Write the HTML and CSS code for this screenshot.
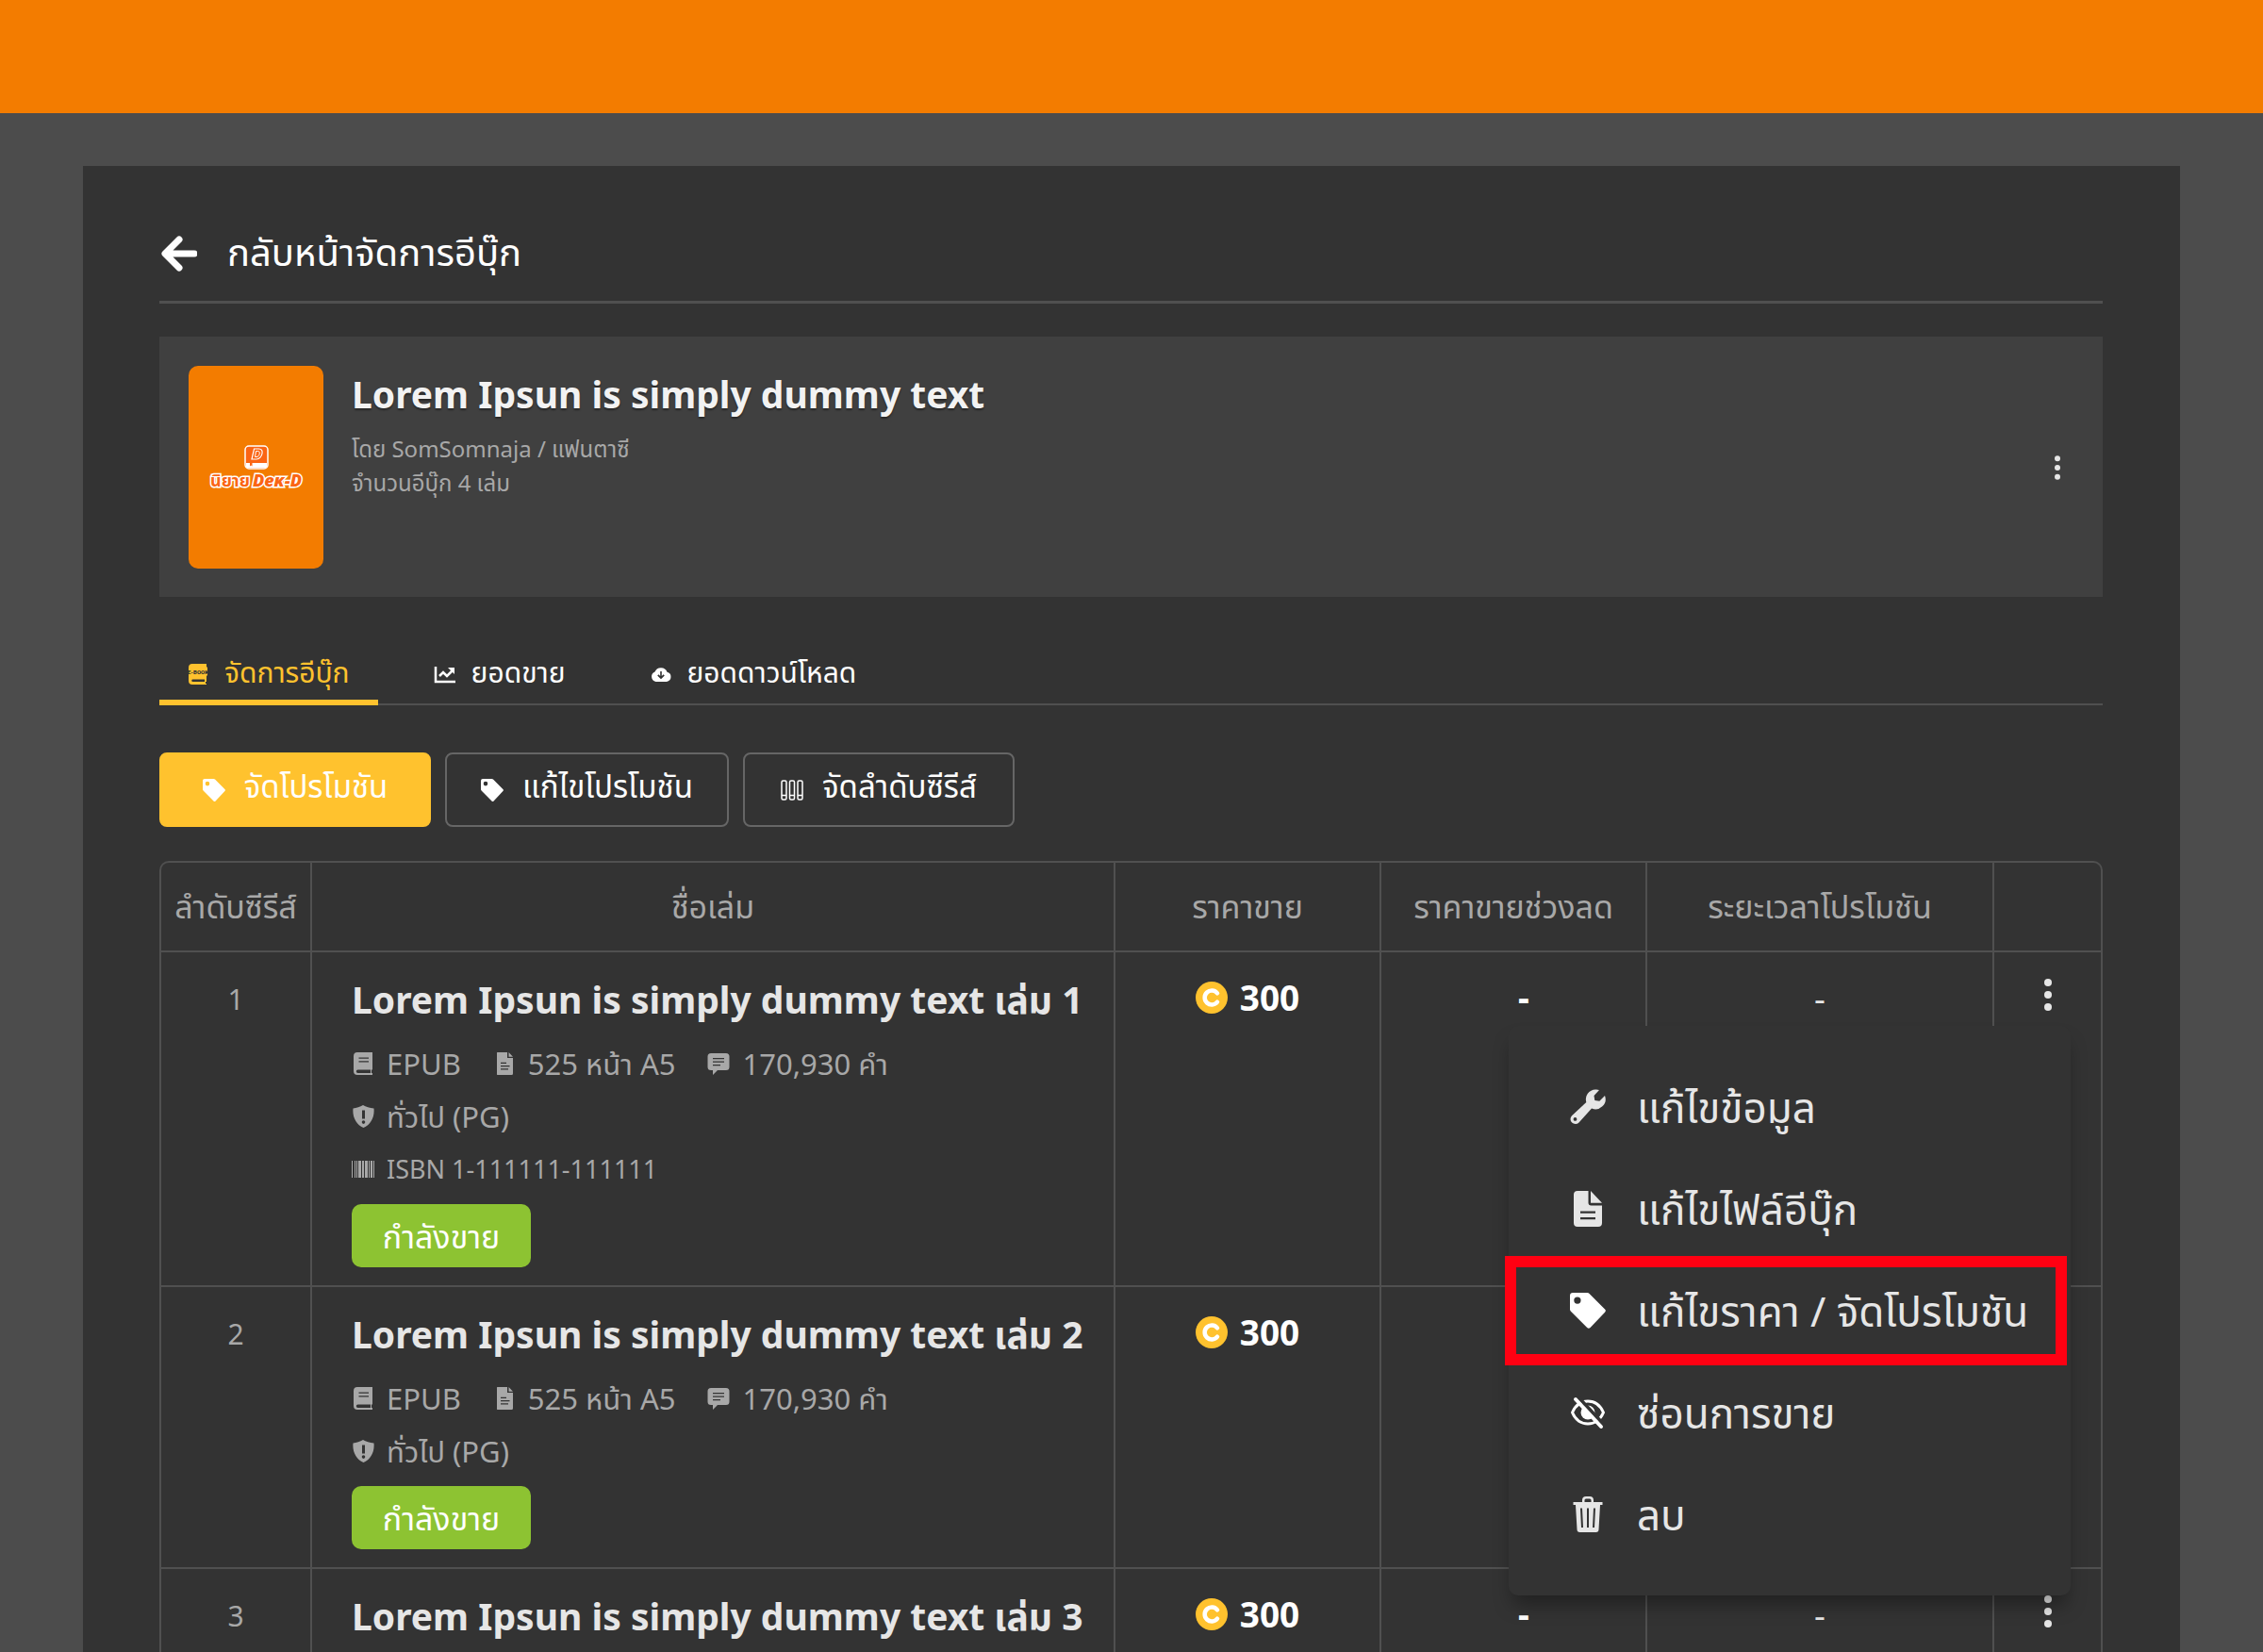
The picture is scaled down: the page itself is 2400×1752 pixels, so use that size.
FILE: index.html
```html
<!DOCTYPE html>
<html lang="th">
<head>
<meta charset="utf-8">
<title>จัดการอีบุ๊ก</title>
<meta name="viewport" content="width=device-width, initial-scale=1">
<link rel="stylesheet" href="styles.css">
</head>
<body>
<svg class="sprite" aria-hidden="true">
  <symbol id="i-tag" viewBox="0 0 24 24"><path fill-rule="evenodd" d="M2 0h9.6a2 2 0 0 1 1.4.6l10.4 10.4a1.5 1.5 0 0 1 0 2.1L13.6 23.4a1.5 1.5 0 0 1-2.1 0L.6 12.5A2 2 0 0 1 0 11.1V2a2 2 0 0 1 2-2zM5 2.8a2.3 2.3 0 1 0 0 4.6 2.3 2.3 0 0 0 0-4.6z"/></symbol>
  <symbol id="i-kebab" viewBox="0 0 8 34"><circle cx="4" cy="4" r="4"/><circle cx="4" cy="17" r="4"/><circle cx="4" cy="30" r="4"/></symbol>
  <symbol id="i-book" viewBox="0 0 24 24"><path fill-rule="evenodd" d="M6 0h16v18.500h-1v3.500h1v2H6a4 4 0 0 1-4-4V4a4 4 0 0 1 4-4zM7.500 5.600v1.200h10.500V5.600zM7.500 9.200v1.200h10.500V9.200zM6.500 18.600a1.700 1.700 0 0 0 0 3.400H20v-3.400z"/></symbol>
  <symbol id="i-file" viewBox="0 0 24 24"><path fill-rule="evenodd" d="M6.500 0H15v6h6v16.500a1.500 1.500 0 0 1-1.500 1.500h-13A1.500 1.500 0 0 1 4 22.500v-21A1.500 1.500 0 0 1 6.500 0zM8 10.800v1.300h6v-1.300zM8 14v1.300h9.500V14zM8 17.200v1.300h8v-1.300zM16.500 0 21 4.700h-4.500z"/></symbol>
  <symbol id="i-chat" viewBox="0 0 24 24"><path fill-rule="evenodd" d="M4 1h16a3.500 3.500 0 0 1 3.500 3.500v11A3.500 3.500 0 0 1 20 19h-9l-5 5v-5H4a3.500 3.500 0 0 1-3.500-3.500v-11A3.500 3.500 0 0 1 4 1zM6 6v1.300h12V6zM6 9.500v1.300h12V9.500zM6 13v1.300h8V13z"/></symbol>
  <symbol id="i-shield" viewBox="0 0 24 24"><path fill-rule="evenodd" d="M12 0c3 2 7 3 11.500 3.500C24.500 13 20 21 12.500 24 5 21 .5 13 1.500 3.500 5 3 9 2 12 0zM11 5.500v9h3v-9zM12.500 16.300a1.800 1.800 0 1 0 0 3.600 1.800 1.800 0 0 0 0-3.600z"/></symbol>
  <symbol id="i-barcode" viewBox="0 0 24 24"><path d="M0 3h1v18H0zM3 3h1v18H3zM5 3h1v18H5zM7 3h3v18H7zM11 3h2v18h-2zM14 3h3v18h-3zM18 3h1v18h-1zM20 3h2v18h-2zM23 3h1v18h-1z"/></symbol>
  <symbol id="i-coin" viewBox="0 0 34 34"><circle cx="17" cy="17" r="17" fill="#ffc22e"/><path d="M23 12.300a7.500 7.500 0 1 0 0 9.400" fill="none" stroke="#fff" stroke-width="4.500" stroke-linecap="round"/></symbol>
</svg>

<header class="topbar"></header>

<main class="panel">
  <nav class="back">
    <a class="back-link" href="#">
      <svg class="back-icon" viewBox="0 0 38 38" aria-hidden="true"><path d="M19 4 4 19l15 15M5 19h30" fill="none" stroke="#fff" stroke-width="7" stroke-linecap="round" stroke-linejoin="round"/></svg>
      <span>กลับหน้าจัดการอีบุ๊ก</span>
    </a>
  </nav>

  <section class="series">
    <div class="cover">
      <svg class="cover-mark" viewBox="0 0 26 26" aria-hidden="true">
        <rect x="1" y="1" width="24" height="24" rx="4" fill="#fb6514" stroke="#fff" stroke-width="1.500"/>
        <path d="M10.500 4h5c3 0 4 2 3.500 5s-3 6-6 6H8z" fill="none" stroke="#fff" stroke-width="1.200"/>
        <path d="M12.500 6.500h2c1.500 0 2 1 1.700 2.700S15 12.500 13 12.500h-1.500z" fill="none" stroke="#fff" stroke-width="1"/>
        <path d="M2 19h22v4a1 1 0 0 1-1 1H3a1 1 0 0 1-1-1z" fill="#fff"/><path d="M6 19h2.500v3.500L7.200 21.500 6 22.500z" fill="#fb6514"/>
      </svg>
      <div class="cover-name"><span>นิยาย</span><b>Deĸ-D</b></div>
    </div>
    <div class="series-info">
      <h1 class="series-title">Lorem Ipsun is simply dummy text</h1>
      <p>โดย SomSomnaja / แฟนตาซี</p>
      <p>จำนวนอีบุ๊ก 4 เล่ม</p>
    </div>
    <button class="kebab kebab-small" type="button" aria-label="เมนู"><svg><use href="#i-kebab"/></svg></button>
  </section>

  <nav class="tabs">
    <a class="tab tab-active" href="#">
      <svg viewBox="0 0 22 22" aria-hidden="true"><path fill-rule="evenodd" d="M5 0h15v3l1 1v8l-1 1v6h-1v2h1v1H5a4 4 0 0 1-4-4V4a4 4 0 0 1 4-4zM5.500 16.500a1 1 0 0 0 0 2.500H18v-2.500z"/><text class="ebook-word" x="11" y="11" text-anchor="middle">E-BOOK</text></svg>
      <span>จัดการอีบุ๊ก</span>
    </a>
    <a class="tab" href="#">
      <svg viewBox="0 0 22 22" aria-hidden="true"><path d="M1 3v16h21" fill="none" stroke="currentColor" stroke-width="2.500"/><path d="m5 13 4-4 4 4 6-6" fill="none" stroke="currentColor" stroke-width="2.500"/><path d="M14 4h7v7z"/></svg>
      <span>ยอดขาย</span>
    </a>
    <a class="tab" href="#">
      <svg viewBox="0 0 22 22" aria-hidden="true"><path fill-rule="evenodd" d="M5.500 19A5.500 5.500 0 0 1 4.500 8.500 7 7 0 0 1 17.500 8.800 5.200 5.200 0 0 1 17 19zM10.200 8v5L8.400 11.300l-1.200 1.200L11 16.200l3.800-3.700-1.200-1.200L11.800 13V8z"/></svg>
      <span>ยอดดาวน์โหลด</span>
    </a>
  </nav>

  <div class="actions">
    <button class="btn btn-primary" type="button"><svg><use href="#i-tag"/></svg><span>จัดโปรโมชัน</span></button>
    <button class="btn" type="button"><svg><use href="#i-tag"/></svg><span>แก้ไขโปรโมชัน</span></button>
    <button class="btn" type="button"><svg viewBox="0 0 24 24" aria-hidden="true"><g fill="none" stroke="currentColor" stroke-width="1.500"><rect x="1" y="2" width="5" height="20" rx="1.500"/><rect x="9.500" y="2" width="5" height="20" rx="1.500"/><rect x="18" y="2" width="5" height="20" rx="1.500"/><path d="M1 17.500h5M9.500 17.500h5M18 17.500h5"/></g></svg><span>จัดลำดับซีรีส์</span></button>
  </div>

  <table class="books">
    <colgroup><col class="c-no"><col><col class="c-price"><col class="c-price"><col class="c-time"><col class="c-menu"></colgroup>
    <thead>
      <tr><th>ลำดับซีรีส์</th><th>ชื่อเล่ม</th><th>ราคาขาย</th><th>ราคาขายช่วงลด</th><th>ระยะเวลาโปรโมชัน</th><th></th></tr>
    </thead>
    <tbody>
      <tr>
        <td class="num">1</td>
        <td class="book">
          <h2>Lorem Ipsun is simply dummy text เล่ม 1</h2>
          <ul class="meta">
            <li><svg><use href="#i-book"/></svg>EPUB</li>
            <li><svg><use href="#i-file"/></svg>525 หน้า A5</li>
            <li><svg><use href="#i-chat"/></svg>170,930 คำ</li>
          </ul>
          <ul class="meta"><li><svg><use href="#i-shield"/></svg>ทั่วไป (PG)</li></ul>
          <ul class="meta"><li class="isbn"><svg><use href="#i-barcode"/></svg>ISBN 1-111111-111111</li></ul>
          <span class="badge">กำลังขาย</span>
        </td>
        <td><span class="price"><svg><use href="#i-coin"/></svg>300</span></td>
        <td class="strong">-</td>
        <td class="dash">-</td>
        <td class="menu-cell">
          <button class="kebab" type="button" aria-label="เมนูเล่ม 1" aria-expanded="true"><svg><use href="#i-kebab"/></svg></button>
          <div class="menu" role="menu">
            <button type="button" role="menuitem"><svg viewBox="0 0 38 38" aria-hidden="true"><path fill-rule="evenodd" d="M27 .500a11 11 0 0 1 4 .4l-5.500 6 .8 5 5 .8 5.700-5.600a10.500 10.500 0 0 1-14 13.300L9.500 35.500a5.200 5.200 0 0 1-7.500-7.300L17.300 14A10.500 10.500 0 0 1 27 .500zM5.500 30a1.900 1.900 0 1 0 0 3.800 1.900 1.900 0 0 0 0-3.800z"/></svg><span>แก้ไขข้อมูล</span></button>
            <button type="button" role="menuitem"><svg viewBox="0 0 38 38" aria-hidden="true"><path fill-rule="evenodd" d="M8 0h11.500v12.500a3 3 0 0 0 3 3H34V34a4 4 0 0 1-4 4H8a4 4 0 0 1-4-4V4a4 4 0 0 1 4-4zM11 21.500v2.300h16v-2.300zM11 28v2.300h16V28zM22 0l12 12.800H22z"/></svg><span>แก้ไขไฟล์อีบุ๊ก</span></button>
            <button class="is-marked" type="button" role="menuitem"><svg><use href="#i-tag"/></svg><span>แก้ไขราคา / จัดโปรโมชัน</span></button>
            <button type="button" role="menuitem"><svg viewBox="0 0 38 38" aria-hidden="true"><path d="M2.500 19C6 11 12 7 19 7s13 4 16.500 12C32 27 26 31 19 31S6 27 2.500 19z" fill="none" stroke="#fff" stroke-width="3"/><circle cx="19" cy="19" r="7.500" fill="#fff"/><path d="m9 3 27 29" stroke="#333" stroke-width="4"/><path d="m6 5 27 29" stroke="#fff" stroke-width="4" stroke-linecap="round"/></svg><span>ซ่อนการขาย</span></button>
            <button type="button" role="menuitem"><svg viewBox="0 0 38 38" aria-hidden="true"><path fill-rule="evenodd" d="M13 6V4a4 4 0 0 1 4-4h4a4 4 0 0 1 4 4v2h9.500v3H32l-1.500 26a3 3 0 0 1-3 3h-17a3 3 0 0 1-3-3L6 9H3.500V6zM15.500 6h7V4a1.500 1.500 0 0 0-1.500-1.500h-4A1.500 1.500 0 0 0 15.500 4zM11 12.500l1 20.500h2l-1-20.500zM18 12.500V33h2V12.500zM25 12.500 24 33h2l1-20.500z"/></svg><span>ลบ</span></button>
          </div>
        </td>
      </tr>
      <tr>
        <td class="num">2</td>
        <td class="book">
          <h2>Lorem Ipsun is simply dummy text เล่ม 2</h2>
          <ul class="meta">
            <li><svg><use href="#i-book"/></svg>EPUB</li>
            <li><svg><use href="#i-file"/></svg>525 หน้า A5</li>
            <li><svg><use href="#i-chat"/></svg>170,930 คำ</li>
          </ul>
          <ul class="meta"><li><svg><use href="#i-shield"/></svg>ทั่วไป (PG)</li></ul>
          <span class="badge">กำลังขาย</span>
        </td>
        <td><span class="price"><svg><use href="#i-coin"/></svg>300</span></td>
        <td></td>
        <td></td>
        <td></td>
      </tr>
      <tr>
        <td class="num">3</td>
        <td class="book"><h2>Lorem Ipsun is simply dummy text เล่ม 3</h2></td>
        <td><span class="price"><svg><use href="#i-coin"/></svg>300</span></td>
        <td class="strong">-</td>
        <td class="dash">-</td>
        <td class="menu-cell"><button class="kebab" type="button" aria-label="เมนูเล่ม 3"><svg><use href="#i-kebab"/></svg></button></td>
      </tr>
    </tbody>
  </table>
</main>
</body>
</html>
```
FILE: styles.css
```css
:root {
  --orange: #f37c00;
  --yellow: #ffc22e;
  --panel: #333;
  --line: #505050;
  --muted: #a8a8a8;
  --text: #e6e6e6;
}

* { box-sizing: border-box; }

body {
  margin: 0;
  min-height: 100vh;
  display: flex;
  flex-direction: column;
  background: #4c4c4c;
  color: #fff;
  font-family: "Noto Sans", "Noto Sans Thai", "Liberation Sans", sans-serif;
  font-size: 32px;
}

h1, h2, p, ul { margin: 0; padding: 0; }
ul { list-style: none; }
a { color: inherit; text-decoration: none; }
button { font: inherit; color: inherit; background: none; border: 0; padding: 0; cursor: pointer; }
svg { fill: currentColor; flex: none; }
.sprite { display: none; }

.topbar { height: 120px; background: var(--orange); }

.panel {
  flex: 1;
  margin: 56px 88px 0;
  padding: 48px 82px 0 81px;
  background: var(--panel);
}

.back { padding-bottom: 5px; border-bottom: 3px solid var(--line); }
.back-link { display: flex; align-items: center; gap: 32px; height: 90px; font-size: 40px; padding-left: 2px; }
.back-icon { width: 38px; height: 38px; }

.series {
  display: flex;
  gap: 30px;
  margin-top: 35px;
  padding: 31px 31px 30px;
  background: #404040;
}
.cover {
  width: 143px;
  height: 215px;
  border-radius: 10px;
  background: var(--orange);
  display: flex;
  flex-direction: column;
  align-items: center;
  justify-content: center;
}
.cover-mark { width: 26px; height: 26px; }
.cover-name {
  display: flex;
  gap: 3px;
  align-items: baseline;
  font-size: 18px;
  line-height: 22px;
  font-weight: 700;
  color: #fb6514;
  -webkit-text-stroke: 3px #fff;
  paint-order: stroke fill;
}
.cover-name b { font-style: italic; }
.series-info { flex: 1; color: var(--muted); font-size: 24px; line-height: 36px; }
.series-title {
  margin-bottom: 10px;
  color: #f2f2f2;
  font-size: 39px;
  line-height: 60px;
  font-weight: 700;
  text-shadow: 0 2px 2px rgba(0, 0, 0, .4);
}

.kebab { display: inline-flex; justify-content: center; width: 48px; color: var(--text); }
.kebab svg { width: 8px; height: 34px; }
.kebab-small { align-self: center; margin-right: -7px; }
.kebab-small svg { width: 6px; height: 26px; }

.tabs { display: flex; gap: 30px; margin-top: 48px; border-bottom: 2px solid var(--line); }
.tab {
  display: flex;
  align-items: center;
  gap: 17px;
  height: 67px;
  padding: 6px 30px 0;
  margin-bottom: -2px;
  font-size: 30px;
  border-bottom: 6px solid transparent;
}
.tab svg { width: 22px; height: 22px; overflow: visible; }
.ebook-word { font-family: Roboto, sans-serif; font-size: 6px; font-weight: 900; fill: var(--panel); }
.tab-active { color: var(--yellow); border-color: var(--yellow); }

.actions { display: flex; gap: 15px; margin-top: 50px; }
.btn {
  display: flex;
  align-items: center;
  justify-content: center;
  gap: 20px;
  min-width: 288px;
  height: 79px;
  padding: 0 36px;
  border: 2px solid #666;
  border-radius: 8px;
  font-size: 33px;
}
.btn svg { width: 24px; height: 24px; }
.btn span { padding-bottom: 4px; }
.btn-primary { background: var(--yellow); border-color: var(--yellow); }

.books {
  width: 100%;
  margin-top: 36px;
  table-layout: fixed;
  border-collapse: separate;
  border-spacing: 0;
  border: 2px solid var(--line);
  border-bottom: 0;
  border-radius: 10px 10px 0 0;
  color: var(--muted);
}
.c-no { width: 160px; }
.c-price { width: 282px; }
.c-time { width: 368px; }
.c-menu { width: 113px; }
.books th, .books td {
  padding: 0;
  text-align: center;
  vertical-align: top;
  border-right: 2px solid var(--line);
  border-bottom: 2px solid var(--line);
}
.books th:last-child, .books td:last-child { border-right: 0; }
.books tbody tr:last-child td { border-bottom: 0; }
.books th { height: 95px; padding-top: 3px; vertical-align: middle; font-size: 34px; font-weight: 400; white-space: nowrap; }
.books td { padding-top: 22px; line-height: 52px; font-size: 30px; }
.books .num { padding-top: 24px; }
.books .book { padding: 22px 20px 19px 42px; text-align: left; }
.books tr:last-child .book { padding-bottom: 10px; }
.books h2 { font-size: 39px; line-height: 56px; font-weight: 700; color: var(--text); white-space: nowrap; }
.meta { display: flex; gap: 34px; height: 56px; align-items: center; }
.books h2 + .meta { margin-top: 12px; }
.meta li { display: flex; align-items: center; gap: 13px; font-size: 31px; white-space: nowrap; }
.meta .isbn { font-size: 27px; }
.meta svg { width: 24px; height: 24px; }
.badge {
  display: flex;
  align-items: center;
  justify-content: center;
  width: 190px;
  height: 67px;
  margin-top: 9px;
  border-radius: 10px;
  background: #8dc332;
  color: #fff;
  font-size: 34px;
}
.price { display: inline-flex; align-items: center; gap: 13px; color: #fff; font-size: 37px; font-weight: 700; }
.price svg { width: 34px; height: 34px; }
.books .strong { padding-left: 22px; color: #fff; font-size: 37px; font-weight: 700; }
.books .dash { color: var(--text); font-size: 37px; }
.books .menu-cell { position: relative; padding-top: 25px; }

.menu {
  position: absolute;
  z-index: 2;
  top: 78px;
  right: 32px;
  width: 596px;
  padding: 32px 0;
  border-radius: 10px;
  background: var(--panel);
  box-shadow: 0 14px 20px -4px rgba(0, 0, 0, .35);
  color: var(--text);
}
.menu button {
  position: relative;
  display: flex;
  align-items: center;
  gap: 33px;
  width: 100%;
  height: 108px;
  padding-left: 65px;
  font-size: 44px;
  white-space: nowrap;
}
.menu svg { width: 38px; height: 38px; }
.menu .is-marked svg { color: #fff; }
.menu .is-marked::after {
  content: "";
  position: absolute;
  inset: -4px 4px -4px -4px;
  border: 12px solid #ff0012;
}
```
